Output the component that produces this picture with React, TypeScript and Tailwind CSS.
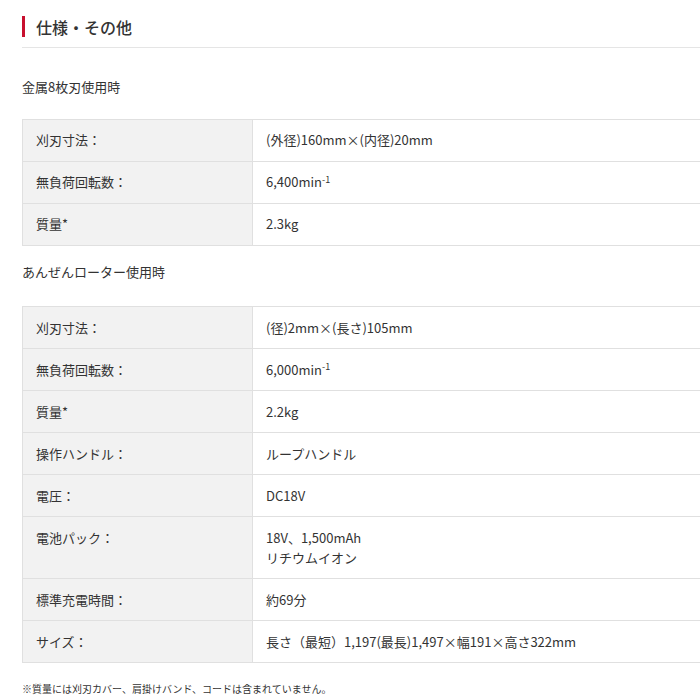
import React from 'react'

type Row = { label: string; value: React.ReactNode }

const sup = (n: string, s: string) => (
  <>
    {n}
    <sup className="text-[9px]">{s}</sup>
  </>
)

const table1: Row[] = [
  { label: '刈刃寸法：', value: '(外径)160mm×(内径)20mm' },
  { label: '無負荷回転数：', value: sup('6,400min', '-1') },
  { label: '質量*', value: '2.3kg' },
]

const table2: Row[] = [
  { label: '刈刃寸法：', value: '(径)2mm×(長さ)105mm' },
  { label: '無負荷回転数：', value: sup('6,000min', '-1') },
  { label: '質量*', value: '2.2kg' },
  { label: '操作ハンドル：', value: 'ループハンドル' },
  { label: '電圧：', value: 'DC18V' },
  {
    label: '電池パック：',
    value: (
      <>
        18V、1,500mAh
        <br />
        リチウムイオン
      </>
    ),
  },
  { label: '標準充電時間：', value: '約69分' },
  { label: 'サイズ：', value: '長さ（最短）1,197(最長)1,497×幅191×高さ322mm' },
]

function SpecTable({ rows }: { rows: Row[] }) {
  return (
    <table className="w-[678px] border-collapse border-t border-l border-[#e0e0e0]">
      <tbody>
        {rows.map((r, i) => (
          <tr key={i} className="border-b border-[#e0e0e0]">
            <th className="w-[230px] bg-[#f2f2f2] text-left font-normal pl-[13px] py-[10.5px] align-top leading-[20px] border-r border-[#e0e0e0]">
              {r.label}
            </th>
            <td className="pl-[13px] py-[10.5px] leading-[20px] align-top">{r.value}</td>
          </tr>
        ))}
      </tbody>
    </table>
  )
}

export default function App() {
  return (
    <div
      className="w-[700px] h-[700px] overflow-hidden bg-white text-[#333] text-[13px] pl-[22px]"
      style={{ fontFamily: '"Noto Sans CJK JP", "Noto Sans", sans-serif' }}
    >
      <div className="pt-[16px] pb-[10px] border-b border-[#e5e5e5]">
        <div className="flex items-center border-l-[3px] border-[#c8102e] pl-[11px] h-[21px]">
          <h2 className="text-[16px] font-medium">仕様・その他</h2>
        </div>
      </div>
      <p className="mt-[29px] mb-[22px]">金属8枚刃使用時</p>
      <SpecTable rows={table1} />
      <p className="mt-[16px] mb-[25px]">あんぜんローター使用時</p>
      <SpecTable rows={table2} />
      <p className="mt-[18px] text-[10px]">※質量には刈刃カバー、肩掛けバンド、コードは含まれていません。</p>
    </div>
  )
}
